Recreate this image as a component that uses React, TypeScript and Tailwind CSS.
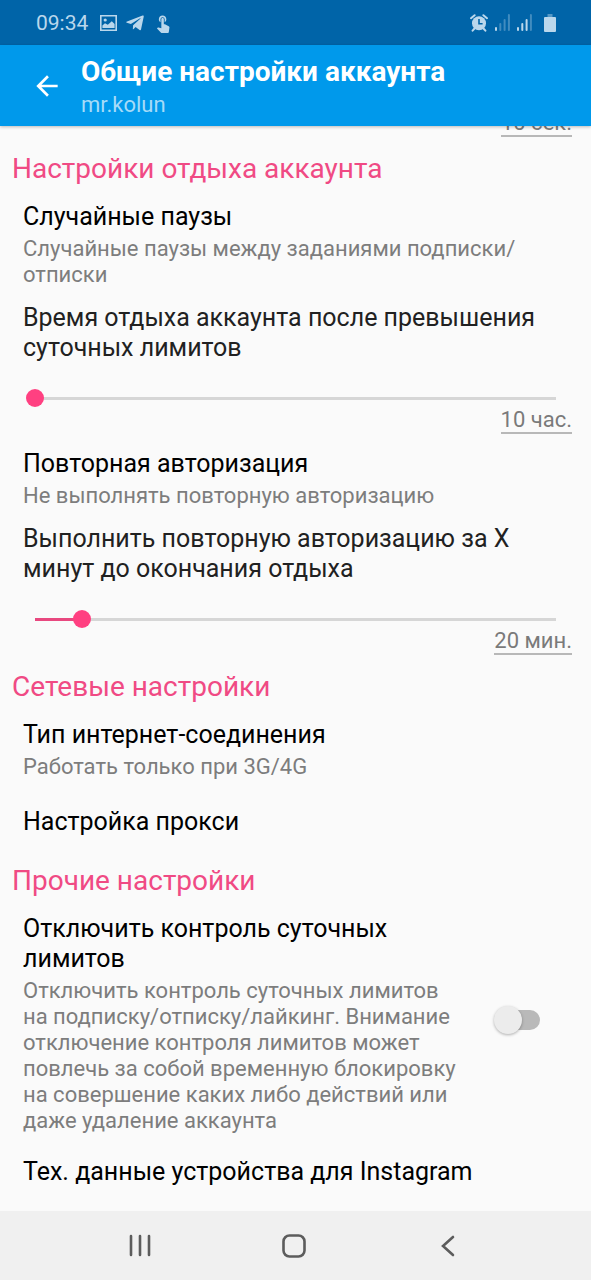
import {useState} from 'react';
import {FaTelegramPlane} from 'react-icons/fa';
import {MdArrowBack, MdTouchApp} from 'react-icons/md';

type SliderRowProps = {
  label: string;
  min: number;
  max: number;
  initial: number;
  unit: string;
};

function StatusBar() {
  return (
    <div className="flex h-[45px] items-center justify-between bg-[#0064a8] pr-[35px] pl-9 text-[#bad7ec]">
      <div className="flex items-center">
        <span className="w-16 text-[21px] leading-6">09:34</span>
        <svg className="h-4 w-[17px]" viewBox="0 0 17 16" aria-hidden="true">
          <path
            fill="currentColor"
            fillRule="evenodd"
            d="M0 0H17V16H0ZM1.6 1.6V14.4H15.4V1.6Z"
          />
          <path
            fill="currentColor"
            d="M2.4 13V10.6L5 8.2 7.8 9.8 11.8 6.2 14.6 9V13Z"
          />
          <circle cx="5.2" cy="5" r="1.6" fill="currentColor" />
        </svg>
        <FaTelegramPlane className="ml-2 size-5" aria-hidden="true" />
        <MdTouchApp className="ml-2 size-5" aria-hidden="true" />
      </div>
      <div className="flex items-center">
        <svg className="size-[18px]" viewBox="0 0 18 18" aria-hidden="true">
          <circle cx="9" cy="9.3" r="7" fill="currentColor" />
          <path
            d="M1 4.2 4.6 1.2M17 4.2 13.4 1.2M4.5 14.5 2.6 16.7M13.5 14.5 15.4 16.7"
            stroke="currentColor"
            strokeWidth="2"
            strokeLinecap="round"
          />
          <path
            d="M9 5V9.8H12.6"
            stroke="#0064a8"
            strokeWidth="1.6"
            fill="none"
          />
        </svg>
        <Signal level={1} />
        <Signal level={3} />
        <svg
          className="ml-3 h-[18px] w-3"
          viewBox="0 0 12 18"
          aria-hidden="true"
        >
          <path d="M3.5 0H8.5V3H3.5Z" fill="currentColor" opacity="0.45" />
          <rect y="3" width="12" height="15" rx="1" fill="currentColor" />
        </svg>
      </div>
    </div>
  );
}

function Signal({level}: {level: number}) {
  return (
    <svg
      className="ml-[7px] h-[17px] w-[15px]"
      viewBox="0 0 15 17"
      aria-hidden="true"
    >
      {[4, 8, 12, 17].map((height, i) => (
        <rect
          key={height}
          x={i * 4.3}
          y={17 - height}
          width="2"
          height={height}
          rx="1"
          fill="currentColor"
          opacity={i < level ? 1 : 0.35}
        />
      ))}
    </svg>
  );
}

function SectionTitle({children}: {children: string}) {
  return (
    <h2 className="px-3 text-[28px] leading-8 text-[#f04a84]">{children}</h2>
  );
}

function Item({title, summary}: {title: string; summary?: string}) {
  return (
    <button
      type="button"
      className="flex w-full flex-col gap-1 pr-5 pl-[23px] text-left"
    >
      <span className="text-[25px] leading-[30px] text-black">{title}</span>
      {summary && (
        <span className="text-[22px] leading-[26px] text-[#7d7d7d]">
          {summary}
        </span>
      )}
    </button>
  );
}

function ValueField({value, label}: {value: string; label: string}) {
  return (
    <input
      type="text"
      readOnly
      value={value}
      aria-label={label}
      className="field-sizing-content border-b-2 border-[#b8b8b8] text-right text-[22px] leading-[25px] text-[#7a7a7a] outline-none"
    />
  );
}

function SliderRow({label, min, max, initial, unit}: SliderRowProps) {
  const [value, setValue] = useState(initial);
  const ratio = (value - min) / (max - min);
  // the track runs between the centres of the 18px thumb's end positions
  const stop = `calc(9px + (100% - 18px) * ${ratio})`;

  return (
    <div>
      <label className="block text-[25px] leading-[30px] text-[#212121]">
        <span className="block pr-5 pl-[23px]">{label}</span>
        <span className="flex px-[26px] pt-[26px]">
          <input
            type="range"
            min={min}
            max={max}
            value={value}
            onChange={(e) => setValue(Number(e.target.value))}
            className="h-[18px] w-full appearance-none bg-size-[100%_3px] bg-center bg-no-repeat [&::-webkit-slider-thumb]:size-[18px] [&::-webkit-slider-thumb]:appearance-none [&::-webkit-slider-thumb]:rounded-full [&::-webkit-slider-thumb]:bg-[#ff4081]"
            style={{
              backgroundImage: `linear-gradient(to right, transparent 9px, #e8487f 9px, #e8487f ${stop}, #d6d6d6 ${stop}, #d6d6d6 calc(100% - 9px), transparent calc(100% - 9px))`,
            }}
          />
        </span>
      </label>
      <div className="flex justify-end pr-[19px]">
        <ValueField value={`${value} ${unit}`} label={label} />
      </div>
    </div>
  );
}

function LimitsSwitch() {
  const [checked, setChecked] = useState(false);

  return (
    <label className="flex items-center pr-[51px] pl-[23px]">
      <span className="flex flex-1 flex-col gap-1 pr-9">
        <span className="text-[25px] leading-[30px] text-black">
          Отключить контроль суточных лимитов
        </span>
        <span className="text-[22px] leading-[26px] text-[#7d7d7d]">
          Отключить контроль суточных лимитов на подписку/отписку/лайкинг.
          Внимание отключение контроля лимитов может повлечь за собой временную
          блокировку на совершение каких либо действий или даже удаление
          аккаунта
        </span>
      </span>
      <input
        type="checkbox"
        role="switch"
        checked={checked}
        onChange={(e) => setChecked(e.target.checked)}
        className="mb-2 flex h-5 w-11 shrink-0 appearance-none items-center rounded-full bg-[#b9b9b9] before:-ml-0.5 before:size-7 before:shrink-0 before:rounded-full before:bg-[#ececec] before:shadow-[0_1px_3px_rgba(0,0,0,0.3)] checked:justify-end checked:bg-[#ff9fc0] checked:before:bg-[#ff4081]"
      />
    </label>
  );
}

export default function App() {
  return (
    <div className="flex min-h-screen flex-col bg-[#fafafa] font-[Roboto,sans-serif]">
      <StatusBar />
      <header className="z-10 flex h-[81px] items-center bg-[#0099eb] pl-[31px] shadow-[0_1px_3px_rgba(0,0,0,0.25)]">
        <button type="button" aria-label="Назад" className="text-white">
          <MdArrowBack className="size-8" />
        </button>
        <div className="pt-[3px] pl-[18px]">
          <h1 className="text-[28px] leading-9 font-bold text-white">
            Общие настройки аккаунта
          </h1>
          <p className="text-[22px] leading-[30px] text-[#a6dbf8]">mr.kolun</p>
        </div>
      </header>

      <main className="flex flex-1 flex-col">
        <div className="mb-4 flex h-[11px] items-end justify-end overflow-hidden pr-[19px]">
          <ValueField value="10 сек." label="Пауза" />
        </div>

        <section className="mb-4 flex flex-col gap-[17px]">
          <SectionTitle>Настройки отдыха аккаунта</SectionTitle>
          <div className="flex flex-col gap-[15px]">
            <Item
              title="Случайные паузы"
              summary="Случайные паузы между заданиями подписки/отписки"
            />
            <SliderRow
              label="Время отдыха аккаунта после превышения суточных лимитов"
              min={10}
              max={100}
              initial={10}
              unit="час."
            />
            <Item
              title="Повторная авторизация"
              summary="Не выполнять повторную авторизацию"
            />
            <SliderRow
              label="Выполнить повторную авторизацию за X минут до окончания отдыха"
              min={2}
              max={200}
              initial={20}
              unit="мин."
            />
          </div>
        </section>

        <section className="mb-7 flex flex-col gap-[17px]">
          <SectionTitle>Сетевые настройки</SectionTitle>
          <div className="flex flex-col gap-[27px]">
            <Item
              title="Тип интернет-соединения"
              summary="Работать только при 3G/4G"
            />
            <Item title="Настройка прокси" />
          </div>
        </section>

        <section className="mb-6 flex flex-col gap-[17px]">
          <SectionTitle>Прочие настройки</SectionTitle>
          <div className="flex flex-col gap-[23px]">
            <LimitsSwitch />
            <Item title="Тех. данные устройства для Instagram" />
          </div>
        </section>
      </main>

      <nav className="flex h-[69px] items-center justify-center gap-[122px] bg-[#f0f0f0] pr-[3px] text-[#5c5c5c]">
        <button type="button" aria-label="Недавние приложения">
          <svg className="size-8" viewBox="0 0 32 32">
            <path
              d="M7 6V25M16 6V25M25 6V25"
              stroke="currentColor"
              strokeWidth="2.6"
              strokeLinecap="round"
            />
          </svg>
        </button>
        <button type="button" aria-label="Главный экран">
          <svg className="size-8" viewBox="0 0 32 32">
            <rect
              x="5.5"
              y="5.5"
              width="21"
              height="21"
              rx="6"
              fill="none"
              stroke="currentColor"
              strokeWidth="2.6"
            />
          </svg>
        </button>
        <button type="button" aria-label="Назад">
          <svg className="size-8" viewBox="0 0 32 32">
            <path
              d="M21 7 11 16 21 25"
              fill="none"
              stroke="currentColor"
              strokeWidth="2.6"
              strokeLinecap="round"
            />
          </svg>
        </button>
      </nav>
    </div>
  );
}
